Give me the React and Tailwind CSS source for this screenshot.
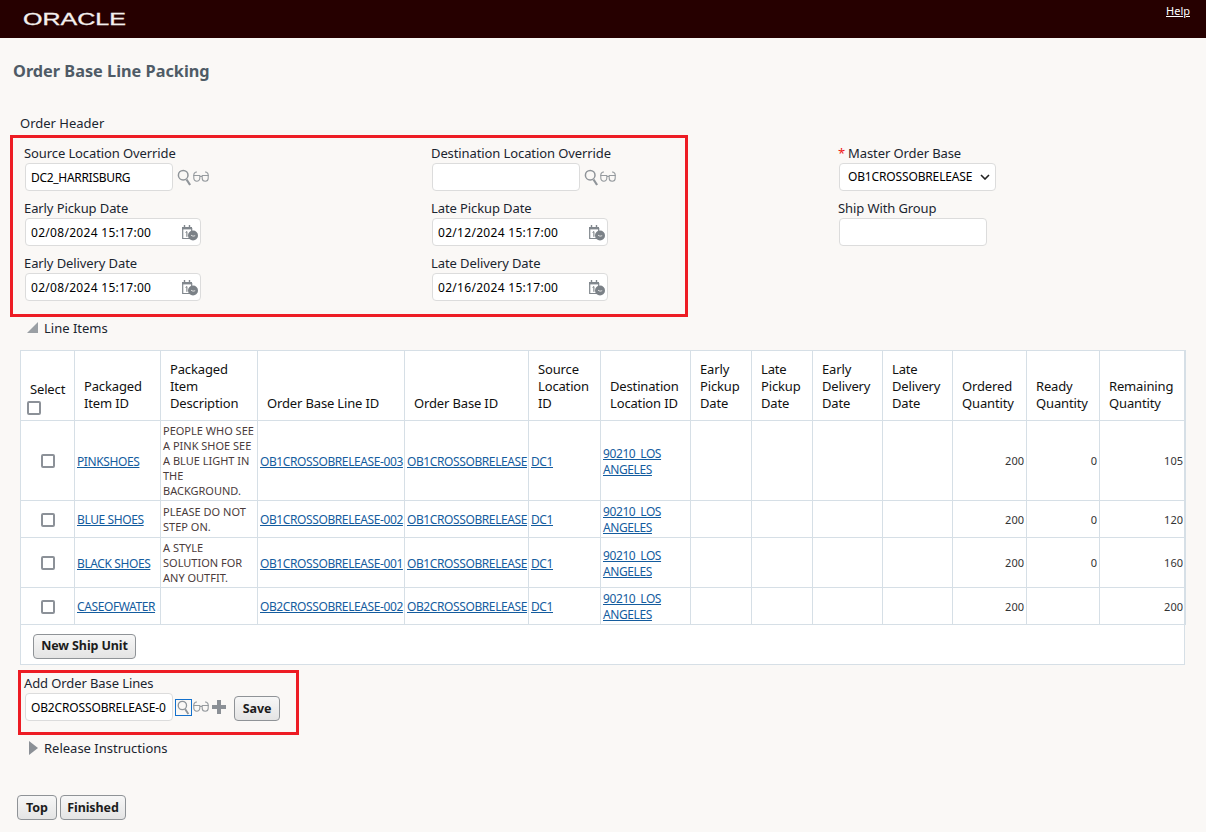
import { Fragment } from "react";

const font = { fontFamily: '"Noto Sans", "Open Sans", sans-serif' };

const SearchIcon = ({ focused }) => (
  <span className={focused ? "flex h-[17px] w-[17px] items-center justify-center border border-[#1270cc]" : "flex h-[17px] w-[17px] items-center justify-center"}>
    <svg viewBox="0 0 15 17" fill="none" stroke="#8f9499" className={focused ? "h-[15px] w-[13px]" : "h-[17px] w-[15px]"}>
      <circle cx="6.2" cy="6.2" r="4.8" strokeWidth="1.5" />
      <path d="M9.5 10.5l3.6 5.5" strokeWidth="2.2" />
    </svg>
  </span>
);

const GlassesIcon = () => (
  <svg width="16" height="12" viewBox="0 0 16 12" fill="none" stroke="#969b9f" strokeWidth="1.1">
    <path d="M1 5a3 3 0 0 1 3-4M15 5a3 3 0 0 0-3-4" />
    <path d="M.8 4.5h6v2.8a3 3 0 0 1-6 0zM9.2 4.5h6v2.8a3 3 0 0 1-6 0zM6.8 5.5h2.4" />
  </svg>
);

const CalendarIcon = () => (
  <svg width="17" height="16" viewBox="0 0 17 16" fill="none" className="mt-[2px]">
    <path d="M.7 3.5h9v10h-9z" stroke="#81878d" strokeWidth="1.2" />
    <path d="M0 2h10v2.4H0z" fill="#81878d" />
    <path d="M2.5 0v3M7.5 0v3" stroke="#81878d" strokeWidth="1.4" />
    <path d="M3.6 7.4l1.3-.8v5.2" stroke="#6d7379" strokeWidth="1" />
    <circle cx="11" cy="10.5" r="5" fill="#7b8187" />
    <path d="M9 10.2l2 1 2.2-.5" stroke="#e6e6e6" strokeWidth="0.9" />
  </svg>
);

const Triangle = ({ open }) =>
  open ? (
    <svg width="11" height="12" viewBox="0 0 11 12"><path d="M11 0v11H0z" fill="#9a9fa4" /></svg>
  ) : (
    <svg width="9" height="14" viewBox="0 0 9 14"><path d="M0 0l9 7-9 7z" fill="#8b9096" /></svg>
  );

const Label = ({ children, required }) => (
  <div className="h-[18px] text-[13px] leading-[18px] tracking-[-0.1px] text-[#1a2530]">
    {required && <span className="mr-[3px] text-[#f01818]">*</span>}
    {children}
  </div>
);

const LookupField = ({ label, value }) => (
  <div className="mb-2">
    <Label>{label}</Label>
    <div className="mt-px ml-px flex items-center">
      <input readOnly value={value} className="h-[28px] w-[148px] rounded-sm border border-[#dcdcdc] bg-white px-[5px] text-[12px] tracking-[-0.3px] text-black outline-none" />
      <span className="ml-[3px] flex items-center">
        <SearchIcon />
        <GlassesIcon />
      </span>
    </div>
  </div>
);

const DateField = ({ label, value }) => (
  <div className="mb-2">
    <Label>{label}</Label>
    <div className="mt-px ml-px flex h-[28px] w-[176px] items-center justify-between rounded-sm border border-[#dcdcdc] bg-white pr-[1px] pl-[5px] text-[12px] tracking-[0.3px] text-black">
      <span className="pt-px">{value}</span>
      <CalendarIcon />
    </div>
  </div>
);

const Btn = ({ children, className = "" }) => (
  <button className={"h-[25px] rounded-sm border border-[#8f9397] bg-gradient-to-b from-[#f7f7f7] to-[#e4e4e4] text-[12.5px] leading-none font-bold tracking-[-0.1px] text-[#1c1c1c] " + className}>
    {children}
  </button>
);

const columns = [
  { w: 54, label: "Select" },
  { w: 86, label: "Packaged Item ID" },
  { w: 97, label: "Packaged Item Description" },
  { w: 147, label: "Order Base Line ID" },
  { w: 124, label: "Order Base ID" },
  { w: 72, label: "Source Location ID" },
  { w: 90, label: "Destination Location ID" },
  { w: 61, label: "Early Pickup Date" },
  { w: 61, label: "Late Pickup Date" },
  { w: 70, label: "Early Delivery Date" },
  { w: 70, label: "Late Delivery Date" },
  { w: 74, label: "Ordered Quantity" },
  { w: 73, label: "Ready Quantity" },
  { w: 86, label: "Remaining Quantity" },
];

const rows = [
  { h: "h-[80px]", item: "PINKSHOES", desc: "PEOPLE WHO SEE A PINK SHOE SEE A BLUE LIGHT IN THE BACKGROUND.", line: "OB1CROSSOBRELEASE-003", base: "OB1CROSSOBRELEASE", ordered: 200, ready: 0, remaining: 105 },
  { h: "h-[37px]", item: "BLUE SHOES", desc: "PLEASE DO NOT STEP ON.", line: "OB1CROSSOBRELEASE-002", base: "OB1CROSSOBRELEASE", ordered: 200, ready: 0, remaining: 120 },
  { h: "h-[50px]", item: "BLACK SHOES", desc: "A STYLE SOLUTION FOR ANY OUTFIT.", line: "OB1CROSSOBRELEASE-001", base: "OB1CROSSOBRELEASE", ordered: 200, ready: 0, remaining: 160 },
  { h: "h-[37px]", item: "CASEOFWATER", desc: "", line: "OB2CROSSOBRELEASE-002", base: "OB2CROSSOBRELEASE", ordered: 200, ready: "", remaining: 200 },
];

const cell = "border border-[#d6dfe6] px-[2px] align-middle";
const linkCell = cell + " pt-[2px] text-[12px] leading-[16px] tracking-[-0.4px]";
const link = "text-[#145c9e] underline";
const num = cell + " text-right text-[11px] leading-[15px] text-[#333]";

const Checkbox = ({ className = "" }) => (
  <span className={"inline-block h-[14px] w-[14px] rounded-[2px] border-2 border-[#8c9198] bg-white " + className} />
);

export default function App() {
  return (
    <div style={font} className="h-[832px] w-[1206px] overflow-hidden bg-[#faf8f6]">
      <div className="flex h-[38px] items-start justify-between bg-[#260000] pr-4">
        <svg width="120" height="20" viewBox="0 0 120 20" className="mt-[12px] ml-[23px] overflow-visible">
          <text x="0" y="13" textLength="103" lengthAdjust="spacingAndGlyphs" fontFamily="Liberation Sans" fontSize="17" fill="#f4f0ee" stroke="#f4f0ee" strokeWidth="0.3">ORACLE</text>
        </svg>
        <a className="mt-[3px] text-[11px] leading-[16px] text-white underline">Help</a>
      </div>

      <div className="pt-[21px] pl-[13px] text-[16.3px] leading-[24px] font-bold text-[#4f5b66]">Order Base Line Packing</div>

      <div className="mt-[31px] ml-[20px] h-[18px] text-[13px] leading-[18px] text-[#1a2530]">Order Header</div>

      <div className="mt-[3px] flex items-start">
        <div className="ml-[10px] flex h-[182px] w-[678px] border-[3px] border-[#ed1c24] pt-[6px] pl-[11px]">
          <div className="w-[407px]">
            <LookupField label="Source Location Override" value="DC2_HARRISBURG" />
            <DateField label="Early Pickup Date" value="02/08/2024 15:17:00" />
            <DateField label="Early Delivery Date" value="02/08/2024 15:17:00" />
          </div>
          <div>
            <LookupField label="Destination Location Override" value="" />
            <DateField label="Late Pickup Date" value="02/12/2024 15:17:00" />
            <DateField label="Late Delivery Date" value="02/16/2024 15:17:00" />
          </div>
        </div>
        <div className="ml-[150px] pt-[9px]">
          <div className="mb-2">
            <Label required>Master Order Base</Label>
            <div className="mt-px ml-px flex h-[28px] w-[157px] items-center justify-between rounded-sm border border-[#dcdcdc] bg-white pr-[5px] pl-[8px] text-[12px] tracking-[-0.15px] text-black">
              <span>OB1CROSSOBRELEASE</span>
              <svg width="10" height="6" viewBox="0 0 10 6" fill="none" stroke="#222" strokeWidth="1.6"><path d="M1 1l4 4 4-4" /></svg>
            </div>
          </div>
          <Label>Ship With Group</Label>
          <div className="mt-px ml-px h-[28px] w-[148px] rounded-sm border border-[#dcdcdc] bg-white" />
        </div>
      </div>

      <div className="mt-[2px] flex h-[18px] items-center pl-[27px] text-[13px] leading-[18px] text-[#1a2530]">
        <Triangle open />
        <span className="ml-[6px]">Line Items</span>
      </div>

      <div className="mt-[13px] ml-[20px] w-[1165px] border border-[#d6dfe6] bg-white">
        <table className="-mt-px -ml-px w-[1165px] table-fixed border-collapse">
          <colgroup>
            {columns.map((c) => (
              <col key={c.label} style={{ width: c.w }} />
            ))}
          </colgroup>
          <thead>
            <tr className="h-[70px]">
              {columns.map((c, i) => (
                <th key={c.label} className={i === 0 ? "border border-[#d6dfe6] pr-0 pb-[1px] pl-[9px] text-left align-bottom text-[13px] leading-[17px] font-normal tracking-[-0.15px] text-[#111]" : "border border-[#d6dfe6] pr-1 pb-[8px] pl-[9px] text-left align-bottom text-[13px] leading-[17px] font-normal tracking-[-0.15px] text-[#111]"}>
                  {i === 0 ? (
                    <Fragment>
                      <div className="mb-[3px]">{c.label}</div>
                      <Checkbox className="-ml-[3px] block" />
                    </Fragment>
                  ) : (
                    c.label
                  )}
                </th>
              ))}
            </tr>
          </thead>
          <tbody>
            {rows.map((r) => (
              <tr key={r.item} className={r.h}>
                <td className={cell + " text-center leading-[15px]"}><Checkbox className="align-middle" /></td>
                <td className={linkCell + " whitespace-nowrap"}><a className={link}>{r.item}</a></td>
                <td className={cell + " text-[11px] leading-[15px] text-[#4a3b3b]"}>{r.desc}</td>
                <td className={linkCell + " whitespace-nowrap"}><a className={link}>{r.line}</a></td>
                <td className={linkCell + " whitespace-nowrap"}><a className={link}>{r.base}</a></td>
                <td className={linkCell}><a className={link}>DC1</a></td>
                <td className={linkCell}><a className={link}>90210_LOS ANGELES</a></td>
                <td className={cell} />
                <td className={cell} />
                <td className={cell} />
                <td className={cell} />
                <td className={num}>{r.ordered}</td>
                <td className={num}>{r.ready}</td>
                <td className={num}>{r.remaining}</td>
              </tr>
            ))}
          </tbody>
        </table>
        <div className="h-[39px] pt-[7px] pl-[12px]">
          <Btn className="w-[103px]">New Ship Unit</Btn>
        </div>
      </div>

      <div className="mt-[5px] ml-[18px] h-[65px] w-[281px] border-[3px] border-[#ed1c24] pt-[1px] pl-[3px]">
        <Label>Add Order Base Lines</Label>
        <div className="mt-px ml-px flex items-center">
          <input readOnly value="OB2CROSSOBRELEASE-0" className="h-[28px] w-[148px] rounded-sm border border-[#dcdcdc] bg-white px-[5px] text-[12px] tracking-[-0.15px] text-black outline-none" />
          <span className="ml-[2px] flex items-center gap-[1px]">
            <SearchIcon focused />
            <GlassesIcon />
            <svg width="14" height="14" viewBox="0 0 14 14" className="ml-[2px]"><path d="M5 0h4v5h5v4H9v5H5V9H0V5h5z" fill="#8b9096" /></svg>
          </span>
          <Btn className="mt-[3px] ml-[8px] w-[46px] pt-[2px]">Save</Btn>
        </div>
      </div>

      <div className="mt-[4px] flex h-[18px] items-center pl-[29px] text-[13px] leading-[18px] text-[#1a2530]">
        <Triangle />
        <span className="ml-[6px]">Release Instructions</span>
      </div>

      <div className="mt-[38px] ml-[17px] flex gap-[3px]">
        <Btn className="w-[40px] pt-px">Top</Btn>
        <Btn className="w-[66px] pt-px">Finished</Btn>
      </div>
    </div>
  );
}
